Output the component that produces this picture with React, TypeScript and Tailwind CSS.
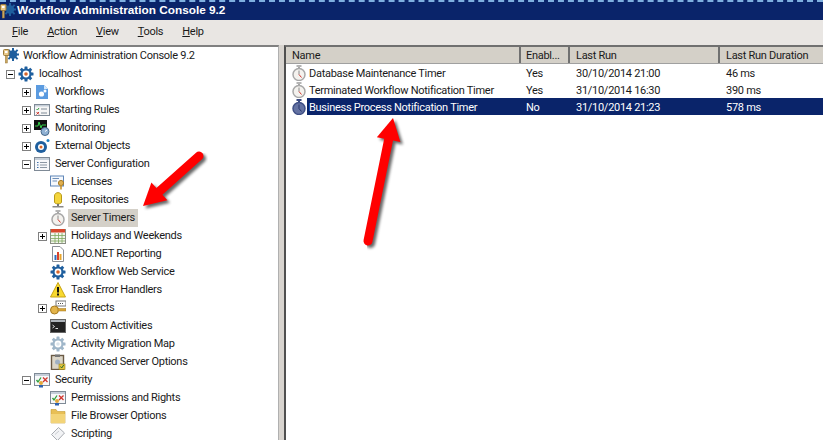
import { ReactNode } from 'react'

const gear = (color: string, hub: string) => (
  <svg viewBox="0 0 16 16" className="w-4 h-4">
    <g fill={color}>
      <circle cx="8" cy="8" r="5.6" />
      <rect x="6.5" y="0.5" width="3" height="15" rx="0.5" />
      <rect x="0.5" y="6.5" width="15" height="3" rx="0.5" />
      <rect x="6.5" y="0.5" width="3" height="15" rx="0.5" transform="rotate(45 8 8)" />
      <rect x="6.5" y="0.5" width="3" height="15" rx="0.5" transform="rotate(-45 8 8)" />
    </g>
    <circle cx="8" cy="8" r="3.4" fill="#fff" />
    <circle cx="8" cy="8" r="1.8" fill={hub} />
  </svg>
)

const KeyGear = () => (
  <svg viewBox="0 0 16 16" className="w-4 h-4">
    <g fill="#1f5f9e">
      <circle cx="10" cy="6.5" r="4.2" />
      <rect x="9" y="0" width="2" height="13" />
      <rect x="3.5" y="5.5" width="13" height="2" />
      <rect x="9" y="0" width="2" height="13" transform="rotate(45 10 6.5)" />
      <rect x="9" y="0" width="2" height="13" transform="rotate(-45 10 6.5)" />
    </g>
    <rect x="0.5" y="1.5" width="5.5" height="6" rx="1" fill="#e8c98a" stroke="#9a7a3a" />
    <rect x="2" y="3" width="2.5" height="2" fill="#fff" />
    <rect x="2.3" y="7.5" width="2" height="7.5" fill="#c9a55f" stroke="#9a7a3a" strokeWidth="0.5" />
  </svg>
)

const Timer = ({ dark = false }: { dark?: boolean }) => (
  <svg viewBox="0 0 16 16" className="w-4 h-4">
    <rect x="5.5" y="0" width="5" height="2" fill={dark ? '#3a4a80' : '#b4b4b4'} />
    <rect x="7" y="2" width="2" height="2" fill={dark ? '#3a4a80' : '#a8a8a8'} />
    <circle cx="8" cy="9.5" r="6" fill={dark ? '#6472a2' : '#f4f2ee'} stroke={dark ? '#3f4f85' : '#a8a8a8'} strokeWidth="1.5" />
    <path d="M8 9.5 L8 5.5" stroke={dark ? '#26346a' : '#8c8c8c'} strokeWidth="1" fill="none" />
    <path d="M8 9.5 L10.5 12.5" stroke={dark ? '#26346a' : '#d0342c'} strokeWidth="1" fill="none" />
  </svg>
)

const icons: Record<string, ReactNode> = {
  workflows: (
    <svg viewBox="0 0 16 16" className="w-4 h-4">
      <path d="M2 1 H10 L14 5 V15 H2 Z" fill="#5b9be0" />
      <path d="M10 1 L14 5 H10 Z" fill="#d6e8fa" />
      <circle cx="7.5" cy="10" r="2.6" fill="#fff" />
      <circle cx="11" cy="7" r="1.5" fill="#fff" />
    </svg>
  ),
  rules: (
    <svg viewBox="0 0 16 16" className="w-4 h-4">
      <rect x="0.5" y="2.5" width="15" height="11" fill="#f6f6f6" stroke="#7f8a96" />
      <rect x="1" y="3" width="14" height="1.5" fill="#c5ced8" />
      <path d="M2.5 7 L3.5 8 L5 6" stroke="#2e9e3a" fill="none" />
      <path d="M2.5 10 L5 12.5 M5 10 L2.5 12.5" stroke="#d0342c" fill="none" />
      <path d="M7 7 H13 M7 11 H13" stroke="#7f8a96" />
    </svg>
  ),
  monitoring: (
    <svg viewBox="0 0 16 16" className="w-4 h-4">
      <rect x="0" y="0" width="13" height="10" fill="#111" />
      <path d="M1 6 H4 L5 2 L7 8 L8 5 H12" stroke="#35d04a" fill="none" />
      <circle cx="11" cy="11.5" r="4" fill="#8fb1d3" stroke="#47688a" />
      <path d="M11 11.5 L13 10" stroke="#fff" />
    </svg>
  ),
  external: (
    <svg viewBox="0 0 16 16" className="w-4 h-4">
      <circle cx="7" cy="9" r="6" fill="#1f5f9e" />
      <circle cx="7" cy="9" r="3" fill="#fff" />
      <circle cx="7" cy="9" r="1.5" fill="#d9662a" />
      <circle cx="14" cy="2.5" r="1.5" fill="#1f7fc4" />
    </svg>
  ),
  config: (
    <svg viewBox="0 0 16 16" className="w-4 h-4">
      <rect x="0.5" y="1.5" width="15" height="13" fill="#f7f8fa" stroke="#7f8a96" />
      <rect x="1" y="2" width="14" height="2" fill="#c5ced8" />
      <path d="M3 6.5 H4.5 M3 9 H4.5 M3 11.5 H4.5" stroke="#3f6fa8" />
      <path d="M6 6.5 H13 M6 9 H13 M6 11.5 H13" stroke="#8b96a3" />
    </svg>
  ),
  licenses: (
    <svg viewBox="0 0 16 16" className="w-4 h-4">
      <rect x="0.5" y="2" width="13" height="10" fill="#f5f8fc" stroke="#5f86b8" />
      <path d="M2.5 4.5 H9 M2.5 7 H7" stroke="#6f8fb8" />
      <circle cx="11" cy="9" r="2.6" fill="#e0b050" stroke="#a57a25" />
      <rect x="10.2" y="11" width="1.6" height="4.5" fill="#c9952f" />
    </svg>
  ),
  repositories: (
    <svg viewBox="0 0 16 16" className="w-4 h-4">
      <path d="M4.5 4 C4.5 -0.5 11.5 -0.5 11.5 4 V10 C11.5 12.5 4.5 12.5 4.5 10 Z" fill="#f4d53c" stroke="#b89a18" />
      <rect x="7" y="12" width="2" height="2" fill="#777" />
      <rect x="2.5" y="14" width="11" height="1.5" fill="#888" />
    </svg>
  ),
  timer: <Timer />,
  calendar: (
    <svg viewBox="0 0 16 16" className="w-4 h-4">
      <rect x="0.5" y="1.5" width="15" height="14" fill="#f3f6ee" stroke="#8a8f84" />
      <rect x="1" y="1" width="14" height="3.5" fill="#d8472c" />
      <path d="M1 7.5 H15 M1 10.5 H15 M1 13 H15 M5 5 V15 M8.5 5 V15 M12 5 V15" stroke="#7da85c" strokeWidth="0.8" />
    </svg>
  ),
  report: (
    <svg viewBox="0 0 16 16" className="w-4 h-4">
      <path d="M2.5 0.5 H10 L13.5 4 V15.5 H2.5 Z" fill="#fff" stroke="#8a8f96" />
      <rect x="4.5" y="9" width="2" height="5" fill="#2f6fc0" />
      <rect x="7" y="6" width="2" height="8" fill="#d9432c" />
      <rect x="9.5" y="8" width="2" height="6" fill="#e8a52c" />
    </svg>
  ),
  service: gear('#1f5f9e', '#d9662a'),
  warning: (
    <svg viewBox="0 0 16 16" className="w-4 h-4">
      <path d="M8 0.5 L15.5 15 H0.5 Z" fill="#f8d92f" stroke="#c8a416" strokeLinejoin="round" />
      <rect x="7" y="5" width="2" height="5.5" fill="#111" />
      <rect x="7" y="11.5" width="2" height="2" fill="#111" />
    </svg>
  ),
  redirects: (
    <svg viewBox="0 0 16 16" className="w-4 h-4">
      <rect x="6" y="1" width="10" height="5" fill="#fff" stroke="#777" />
      <path d="M8 3.5 H14" stroke="#555" strokeDasharray="1 1" />
      <circle cx="4.5" cy="10" r="4" fill="#e3b44a" stroke="#a5791f" />
      <rect x="8" y="8.5" width="8" height="2.5" fill="#d9a535" stroke="#a5791f" strokeWidth="0.5" />
    </svg>
  ),
  console: (
    <svg viewBox="0 0 16 16" className="w-4 h-4">
      <rect x="0.5" y="1.5" width="15" height="13" fill="#222" stroke="#666" />
      <rect x="1" y="2" width="14" height="2" fill="#aeb4ba" />
      <path d="M2.5 7 L4.5 8.5 L2.5 10 M5.5 10.5 H8" stroke="#ddd" fill="none" />
    </svg>
  ),
  migration: gear('#9fb6c9', '#dbe4ec'),
  advanced: (
    <svg viewBox="0 0 16 16" className="w-4 h-4">
      <rect x="1.5" y="1.5" width="12" height="14" fill="#dcd6c8" stroke="#6b5a44" strokeWidth="1.4" />
      <rect x="5" y="0.5" width="5" height="2.5" fill="#777" />
      <circle cx="7.5" cy="8" r="2.5" fill="#9fb0c4" />
      <rect x="9" y="10" width="6" height="5.5" fill="#e2c23d" stroke="#94801c" strokeWidth="0.6" />
      <path d="M10.5 12.5 L11.7 14 L13.7 11" stroke="#2b6d2b" fill="none" />
    </svg>
  ),
  security: (
    <svg viewBox="0 0 16 16" className="w-4 h-4">
      <rect x="0.5" y="1.5" width="15" height="12" fill="#f7f8fa" stroke="#7f8a96" />
      <rect x="1" y="2" width="14" height="2" fill="#c5ced8" />
      <path d="M2.5 8 L4 10 L7 5.5" stroke="#2e9e3a" strokeWidth="1.3" fill="none" />
      <path d="M9 5.5 L13.5 10 M13.5 5.5 L9 10" stroke="#d0342c" strokeWidth="1.3" fill="none" />
      <circle cx="7" cy="11" r="2" fill="#e3a83a" />
      <rect x="5" y="13" width="4" height="2.5" fill="#2f62b0" />
    </svg>
  ),
  folder: (
    <svg viewBox="0 0 16 16" className="w-4 h-4">
      <path d="M1 1.5 H6 L7.5 3.5 H15 V15 H1 Z" fill="#e8bf55" stroke="#c29a34" strokeWidth="0.6" />
      <rect x="1" y="6" width="14" height="9" fill="#f3d478" />
    </svg>
  ),
  scripting: (
    <svg viewBox="0 0 16 16" className="w-4 h-4">
      <path d="M8.5 1.5 L14.5 7 L7.5 14.5 L1.5 8.5 Z" fill="#f2f3f5" stroke="#a8acb2" />
      <path d="M5 8.5 L9 5" stroke="#c9ccd1" />
    </svg>
  ),
}

type Node = { label: string; icon: string; depth: 1 | 2 | 3; exp?: '+' | '-'; selected?: boolean }

const tree: Node[] = [
  { label: 'localhost', icon: 'service', depth: 1, exp: '-' },
  { label: 'Workflows', icon: 'workflows', depth: 2, exp: '+' },
  { label: 'Starting Rules', icon: 'rules', depth: 2, exp: '+' },
  { label: 'Monitoring', icon: 'monitoring', depth: 2, exp: '+' },
  { label: 'External Objects', icon: 'external', depth: 2, exp: '+' },
  { label: 'Server Configuration', icon: 'config', depth: 2, exp: '-' },
  { label: 'Licenses', icon: 'licenses', depth: 3 },
  { label: 'Repositories', icon: 'repositories', depth: 3 },
  { label: 'Server Timers', icon: 'timer', depth: 3, selected: true },
  { label: 'Holidays and Weekends', icon: 'calendar', depth: 3, exp: '+' },
  { label: 'ADO.NET Reporting', icon: 'report', depth: 3 },
  { label: 'Workflow Web Service', icon: 'service', depth: 3 },
  { label: 'Task Error Handlers', icon: 'warning', depth: 3 },
  { label: 'Redirects', icon: 'redirects', depth: 3, exp: '+' },
  { label: 'Custom Activities', icon: 'console', depth: 3 },
  { label: 'Activity Migration Map', icon: 'migration', depth: 3 },
  { label: 'Advanced Server Options', icon: 'advanced', depth: 3 },
  { label: 'Security', icon: 'security', depth: 2, exp: '-' },
  { label: 'Permissions and Rights', icon: 'security', depth: 3 },
  { label: 'File Browser Options', icon: 'folder', depth: 3 },
  { label: 'Scripting', icon: 'scripting', depth: 3 },
]

const indent = { 1: 'pl-[3px]', 2: 'pl-[19px]', 3: 'pl-[35px]' }

const timers = [
  { name: 'Database Maintenance Timer', enabled: 'Yes', last: '30/10/2014 21:00', dur: '46 ms' },
  { name: 'Terminated Workflow Notification Timer', enabled: 'Yes', last: '31/10/2014 16:30', dur: '390 ms' },
  { name: 'Business Process Notification Timer', enabled: 'No', last: '31/10/2014 21:23', dur: '578 ms', selected: true },
]

function Expander({ sign }: { sign: '+' | '-' }) {
  return (
    <span className="relative block w-[9px] h-[9px] border border-[#808080] bg-white">
      <span className="absolute left-[1px] top-[3px] w-[5px] h-px bg-black" />
      {sign === '+' && <span className="absolute left-[3px] top-[1px] w-px h-[5px] bg-black" />}
    </span>
  )
}

function Arrow({ x1, y1, x2, y2 }: { x1: number; y1: number; x2: number; y2: number }) {
  const ang = Math.atan2(y2 - y1, x2 - x1)
  const bx = x2 - Math.cos(ang) * 22
  const by = y2 - Math.sin(ang) * 22
  const nx = -Math.sin(ang) * 12
  const ny = Math.cos(ang) * 12
  const head = `${x2},${y2} ${bx + nx},${by + ny} ${bx - nx},${by - ny}`
  return (
    <g>
      <g opacity="0.6" transform="translate(2.5 2.5)" filter="url(#soft)">
        <line x1={x1} y1={y1} x2={bx} y2={by} stroke="#000" strokeWidth="9" strokeLinecap="round" />
        <polygon points={head} fill="#000" />
      </g>
      <line x1={x1} y1={y1} x2={bx} y2={by} stroke="#ff0000" strokeWidth="9" strokeLinecap="round" />
      <polygon points={head} fill="#ff0000" />
    </g>
  )
}

export default function App() {
  return (
    <div className="relative w-[823px] h-[440px] overflow-hidden bg-white text-[11px] tracking-[-0.28px] text-[#1a1a1a] font-['Roboto',sans-serif]">
      {/* title bar */}
      <div className="h-[20px] bg-[#0a246a] border-t-2 border-dashed border-t-[#7fb0e0] flex items-center">
        <span className="w-4 h-4 shrink-0"><KeyGear /></span>
        <span className="text-white font-bold text-[11.8px] tracking-normal ml-px font-['Liberation_Sans',sans-serif]">Workflow Administration Console 9.2</span>
      </div>
      {/* menu */}
      <div className="h-[25px] bg-[#e9e6e3] flex items-center pl-[12px] gap-[19px]">
        {['File', 'Action', 'View', 'Tools', 'Help'].map(m => (
          <span key={m}>
            <span className="underline">{m[0]}</span>
            {m.slice(1)}
          </span>
        ))}
      </div>
      <div className="flex h-[395px]">
        {/* tree */}
        <div className="w-[279px] shrink-0 border-t-2 border-t-[#808080] border-r border-r-[#b0b0b0] overflow-hidden">
          <div className="h-[18px] flex items-center pl-[3px]">
            <KeyGear />
            <span className="ml-[4px]">Workflow Administration Console 9.2</span>
          </div>
          {tree.map(n => (
            <div key={n.label + n.depth} className={`h-[18px] flex items-center ${indent[n.depth]}`}>
              <span className="w-[15px] shrink-0 flex justify-center">{n.exp && <Expander sign={n.exp} />}</span>
              <span className="w-4 h-4 shrink-0">{icons[n.icon]}</span>
              <span className={`ml-[2px] px-[3px] h-[18px] leading-[18px] ${n.selected ? 'bg-[#d4d0c8]' : ''}`}>{n.label}</span>
            </div>
          ))}
        </div>
        <div className="w-[5px] shrink-0 bg-[#d8d4cf]" />
        {/* list */}
        <div className="flex-1 min-w-0 border-t-2 border-t-[#707070] border-l-2 border-l-[#505050] overflow-hidden">
          <div className="flex h-[17px] bg-[#d4d0c8] leading-[17px] border-b border-b-[#a0a0a0]">
            <div className="w-[235px] pl-[6px] border-r-2 border-r-[#707070]">Name</div>
            <div className="w-[49px] pl-[5px] border-r-2 border-r-[#707070] truncate">Enabl...</div>
            <div className="w-[150px] pl-[6px] border-r-2 border-r-[#707070]">Last Run</div>
            <div className="flex-1 pl-[6px]">Last Run Duration</div>
          </div>
          {timers.map(t => (
            <div key={t.name} className="flex h-[17px] items-center">
              <span className="w-[21px] pl-[5px] shrink-0"><Timer dark={t.selected} /></span>
              <div className={`flex flex-1 h-[17px] leading-[19px] ${t.selected ? 'bg-[#0a246a] text-white' : ''}`}>
                <span className="w-[214px] pl-[2px]">{t.name}</span>
                <span className="w-[49px] pl-[5px]">{t.enabled}</span>
                <span className="w-[150px] pl-[6px]">{t.last}</span>
                <span className="pl-[6px]">{t.dur}</span>
              </div>
            </div>
          ))}
        </div>
      </div>
      {/* annotation arrows */}
      <svg className="absolute inset-0 pointer-events-none" width="823" height="440">
        <defs>
          <filter id="soft"><feGaussianBlur stdDeviation="1.5" /></filter>
        </defs>
        <Arrow x1={199} y1={156} x2={143} y2={206} />
        <Arrow x1={368} y1={241} x2={393} y2={118} />
      </svg>
    </div>
  )
}
